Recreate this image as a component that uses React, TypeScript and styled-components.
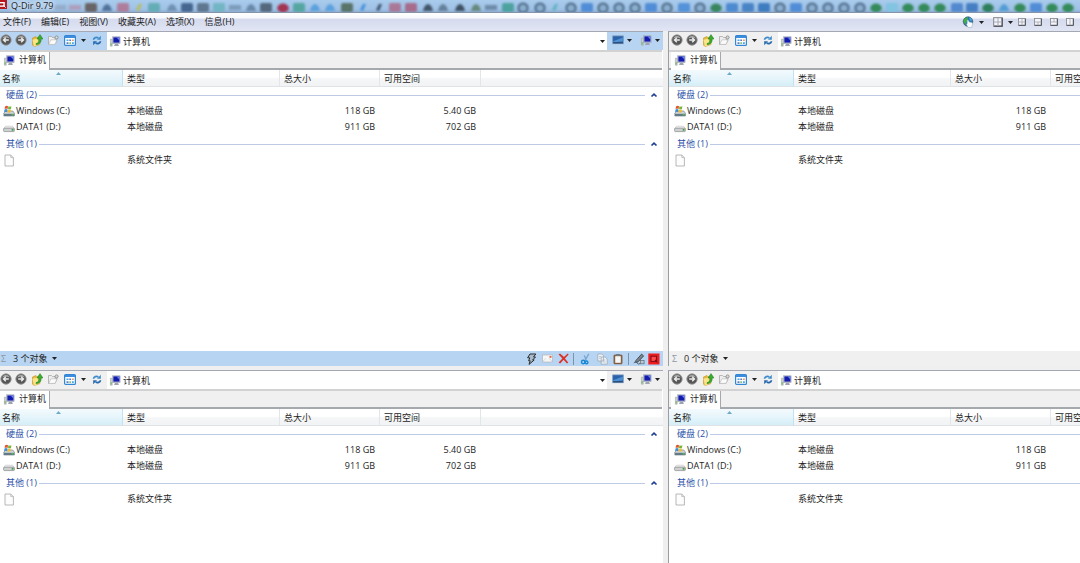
import React from 'react';
import styled, { createGlobalStyle } from 'styled-components';

const GlobalStyle = createGlobalStyle`
  * { box-sizing: border-box; }
  body {
    margin: 0;
    overflow: hidden;
    background: #f0f0f0;
    color: #1d1d1d;
    font: 9px/14px "Open Sans", "Noto Sans CJK SC", sans-serif;
  }
  button, input {
    font: inherit;
    color: inherit;
    border: 0;
    padding: 0;
    margin: 0;
    background: none;
  }
  svg { display: block; flex: none; }
`;

const Shell = styled.div`
  height: 100vh;
  display: flex;
  flex-direction: column;
`;

const TitleBar = styled.header`
  flex: none;
  height: 13px;
  overflow: hidden;
  display: grid;
  background: linear-gradient(#a9cbec, #9fc2e6 75%, #8fb0d4);
  border-bottom: 1px solid #8593a8;
  > * { grid-area: 1 / 1; }
`;

const TitleText = styled.div`
  display: flex;
  align-items: flex-start;
  gap: 3px;
  z-index: 1;
`;

const TitleName = styled.h1`
  margin: 0;
  font: inherit;
  line-height: 12px;
  text-shadow: 0 0 4px #fff, 0 0 6px #fff;
`;

const MenuBar = styled.nav`
  flex: none;
  height: 18px;
  display: flex;
  align-items: center;
  justify-content: space-between;
  padding: 0 2px 0 3px;
  background: linear-gradient(#fff, #f7f8fc 28%, #d5dbee 34%, #e1e5f4);
`;

const Menus = styled.div`
  display: flex;
  gap: 10px;
`;

const LayoutTools = styled.div`
  display: grid;
  grid-template-columns: 12px 14px 19px 7px repeat(4, 16px);
  align-items: center;
`;

const IconButton = styled.button`
  display: flex;
  align-items: center;
  justify-content: center;
  min-width: 0;
`;

const Workspace = styled.main`
  flex: 1;
  min-height: 0;
  display: grid;
  grid-template-columns: minmax(0, 663fr) 5px minmax(0, 412fr);
  grid-template-rows: minmax(0, 335fr) 4px minmax(0, 193fr);
  background: #efefef;
`;

const Cell = styled.div<{ $right: boolean; $bottom: boolean }>`
  grid-column: ${p => (p.$right ? 3 : 1)};
  grid-row: ${p => (p.$bottom ? 3 : 1)};
  overflow: hidden;
  display: flex;
  border-top: 1px solid #a4a8b2;
  border-left: ${p => (p.$right ? '1px solid #9a9da1' : '0')};
`;

const PaneBox = styled.section<{ $edge: number; $wide: boolean }>`
  --edge: ${p => p.$edge}px;
  flex: 1 0 ${p => (p.$wide ? '665px' : '0')};
  min-width: 0;
  display: flex;
  flex-direction: column;
  background: #fff;
`;

const Toolbar = styled.div<{ $active: boolean }>`
  flex: none;
  height: 18px;
  display: flex;
  padding-left: var(--edge);
  background: ${p => (p.$active ? '#b7d4f2' : '#f0f0f0')};
`;

const NavTools = styled.div`
  flex: none;
  display: grid;
  grid-template-columns: 11px 20px 12px 20px 14px 12px 16px 2px;
  align-items: center;
  padding-bottom: 2px;
`;

const PlaceTools = styled.div`
  flex: none;
  display: flex;
  gap: 6px;
  padding: 0 1px 2px 5px;
`;

const SplitButton = styled.div`
  display: grid;
  grid-template-columns: 12px 10px;
  align-items: center;
`;

const Address = styled.label`
  flex: 1;
  min-width: 0;
  display: flex;
  align-items: center;
  gap: 2px;
  padding: 0 2px;
  background: #fff;
`;

const AddressInput = styled.input`
  flex: 1;
  min-width: 0;
  height: 16px;
  outline: 0;
`;

const TabStrip = styled.div`
  flex: none;
  height: 20px;
  display: flex;
  margin-right: 1px;
  padding-left: var(--edge);
  background: #f0f0f0;
  border-top: 2px solid #d2d2d2;
  border-bottom: 2px solid #a5a9ad;
`;

const Tab = styled.button`
  display: flex;
  align-items: center;
  gap: 4px;
  width: 50px;
  height: 18px;
  padding: 0 0 2px 3px;
  background: #fff;
  border-right: 1px solid #a5a9ad;
`;

const List = styled.div`
  flex: 1;
  min-height: 0;
  overflow: hidden;
`;

const Table = styled.table`
  width: 100%;
  table-layout: fixed;
  border-collapse: separate;
  border-spacing: 0;
`;

const NameCol = styled.col`
  width: calc(123px + var(--edge));
`;

const Col = styled.col<{ $w?: number }>`
  width: ${p => (p.$w ? `${p.$w}px` : 'auto')};
`;

const Th = styled.th<{ $sorted?: boolean }>`
  height: 17px;
  padding: 0 4px;
  text-align: left;
  font-weight: 400;
  vertical-align: middle;
  white-space: nowrap;
  background: ${p => (p.$sorted
    ? 'linear-gradient(#f3fafd, #e6f5fb 50%, #d5eef7)'
    : 'linear-gradient(#fff 45%, #f5f6f7 55%, #f2f3f4)')};
  border-right: 1px solid ${p => (p.$sorted ? '#bfe3f1' : '#e3e6e9')};
  border-bottom: 1px solid #dfe3e6;
  padding-top: 2px;
  &:first-child { padding-left: calc(2px + var(--edge)); }
  &:last-child { border-right: 0; }
`;

const HeadInner = styled.span`
  display: grid;
  grid-template-columns: 1fr 8px 1fr;
  svg { align-self: start; }
`;

const GroupCell = styled.th`
  height: 16px;
  padding: 0 5px 0 calc(6px + var(--edge));
  font-weight: 400;
  color: #2a4fa8;
  text-align: left;
  tbody + tbody & { height: 17px; padding-top: 1px; }
`;

const GroupInner = styled.div`
  display: flex;
  align-items: center;
  height: 16px;
`;

const GroupName = styled.span`
  flex: none;
  width: 33px;
  white-space: nowrap;
`;

const GroupLine = styled.span`
  flex: 1;
  height: 1px;
  margin-right: 5px;
  background: #bccae6;
`;

const Td = styled.td<{ $num?: boolean }>`
  height: 16px;
  padding: 0 5px 0 4px;
  vertical-align: middle;
  white-space: nowrap;
  text-align: ${p => (p.$num ? 'right' : 'left')};
  &:first-child { padding-left: calc(3px + var(--edge)); }
`;

const FileName = styled.span`
  display: flex;
  align-items: center;
  gap: 1px;
  height: 14px;
`;

const StatusBar = styled.footer<{ $active: boolean }>`
  flex: none;
  height: 15px;
  display: flex;
  justify-content: space-between;
  padding: 0 2px 0 var(--edge);
  background: ${p => (p.$active ? '#b7d4f2' : '#f0f0f0')};
`;

const StatusInfo = styled.div`
  display: flex;
  align-items: center;
  gap: 4px;
`;

const Sigma = styled.span`
  width: 9px;
  padding-left: 1px;
  color: #8d98a3;
`;

const StatusTools = styled.div`
  display: grid;
  grid-template-columns: 16px 16px 16px 5px 18px 16px 16px 5px 16px 14px;
  align-items: center;
  justify-items: center;
`;

const Divider = styled.span`
  width: 1px;
  height: 12px;
  background: #7d93aa;
`;

/* ---------- icons ---------- */

const Caret = () => (
  <svg width="5" height="3" viewBox="0 0 5 3"><path d="M0 0h5L2.5 3z" fill="#222" /></svg>
);

const Arrow = ({ flip }: { flip?: boolean }) => (
  <svg width="12" height="12" viewBox="0 0 12 12">
    <circle cx="6" cy="6" r="5.2" fill="#565656" stroke="#979797" strokeWidth=".9" />
    <path d="M2 4.4a4.4 4.4 0 0 1 8 0Q6 3 2 4.4" fill="#a5a5a5" />
    <path d={flip ? 'M3.2 6h5M6.2 3.8 8.5 6 6.2 8.2' : 'M8.8 6h-5M5.8 3.8 3.5 6l2.3 2.2'} fill="none" stroke="#ececec" strokeWidth="1.4" />
  </svg>
);

const FolderUp = () => (
  <svg width="12" height="13" viewBox="0 0 12 13">
    <path d="M1.5 4 5 2.5l1 1.2 3-.7v7.5L3 12.5 1.5 11z" fill="#e6b93a" stroke="#bd932b" strokeWidth=".6" />
    <path d="m1.5 5.8 5-1.4L9.3 10 3 12.5z" fill="#fbe487" />
    <path d="M5 9.6c2.5-.4 3-2 2.8-4.6H6L9 .6 12 5h-1.8c.2 3.4-1.6 5.6-5.2 5.6z" fill="#3cab2f" stroke="#1f7a1c" strokeWidth=".5" />
  </svg>
);

const NewFolder = () => (
  <svg width="12" height="12" viewBox="0 0 12 12">
    <path d="M1.5 2.5h3l.8 1H8v2.2h2.2L8 10.5H1.5z" fill="#eee" stroke="#a9a9a9" strokeWidth=".8" />
    <path d="m1.7 10.4 2.2-4.6h6L8 10.4z" fill="#fbfbfb" stroke="#b5b5b5" strokeWidth=".6" />
    <circle cx="9.6" cy="3.4" r="1.5" fill="#ddd" stroke="#8c8c8c" strokeWidth=".9" />
  </svg>
);

const Views = () => (
  <svg width="12" height="11" viewBox="0 0 12 11">
    <rect x=".6" y=".6" width="10.8" height="9.8" rx="1" fill="#fff" stroke="#3286d4" strokeWidth="1.2" />
    <path d="M1 1h10v2H1z" fill="#3c8ddb" />
    <path d="M2.5 4.5h2v1.6h-2zM8 7.3h1.8v1.6H8z" fill="#3fa7e8" />
    <path d="M5.3 4.5h1.8v1.6H5.3zM2.5 7.3h2v1.6h-2z" fill="#5b78c0" />
    <path d="M8 4.5h1.8v1.6H8z" fill="#e79a67" />
    <path d="M5.3 7.3h1.8v1.6H5.3z" fill="#78b96c" />
  </svg>
);

const Refresh = () => (
  <svg width="10" height="11" viewBox="0 0 10 11">
    <path d="M1.4 4.8C2 2.6 4.4 1.8 6.4 3" fill="none" stroke="#3d8bcb" strokeWidth="1.6" />
    <path d="M8.8.8v4H5z" fill="#3d8bcb" />
    <path d="M8.6 6.2C8 8.4 5.6 9.2 3.6 8" fill="none" stroke="#2468ad" strokeWidth="1.6" />
    <path d="M1.2 10.2v-4H5z" fill="#2468ad" />
  </svg>
);

const Computer = () => (
  <svg width="12" height="11" viewBox="0 0 12 11">
    <path d="M1.4 3.2h1.8v7H1.4z" fill="#d4d9d4" stroke="#9aa69c" strokeWidth=".6" />
    <path d="M1.6 7.2h1.1v2.4H1.6z" fill="#6bb36b" />
    <rect x="3.7" y=".8" width="7.4" height="6.8" fill="#b9bed2" stroke="#9298ad" strokeWidth=".5" />
    <path d="M4.4 1.4h6v5.2h-6z" fill="#141cae" />
    <path d="M7.6 1.4h2.8v3z" fill="#6d8cf0" />
    <path d="M6 7.7h3l.9 2.2H5z" fill="#9ea3af" />
  </svg>
);

const Desktop = () => (
  <svg width="12" height="10" viewBox="0 0 12 10">
    <rect x=".7" y=".9" width="10.6" height="7.8" fill="#2a62ac" stroke="#7d9bbd" strokeWidth=".8" />
    <path d="M1.2 6.2 10.9 2.4v4L1.2 7.2z" fill="#4f92d4" />
    <path d="M1.2 7.3h9.7v1.1H1.2z" fill="#2f4a6b" />
  </svg>
);

const WindowsDrive = () => (
  <svg width="12" height="12" viewBox="0 0 12 12">
    <path d="m.8 8.2 2-2.2h7l1.6 2.2V11H.8z" fill="#cfd5d8" stroke="#69767c" strokeWidth=".6" />
    <path d="M1 8.8h10.2V11H1z" fill="#637b84" />
    <path d="M8.6 9.3h2v1h-2z" fill="#54d24c" />
    <path d="M2 1.4q1.5-1 3-.2L4.6 4Q3.2 3.2 1.6 4z" fill="#e1532c" />
    <path d="M5.4 1.3q1.5.8 3 0L8 4.1q-1.5.8-3 0z" fill="#74b83a" />
    <path d="M1.5 4.5Q3 3.7 4.5 4.5l-.4 2.7q-1.5-.8-3 0z" fill="#3b8ed6" />
    <path d="M4.9 4.6q1.5.8 3 0l-.4 2.7q-1.5.8-3 0z" fill="#f4bd2d" />
  </svg>
);

const Drive = () => (
  <svg width="12" height="12" viewBox="0 0 12 12">
    <path d="M.8 7.4 2.6 5.2h6.8l1.8 2.2z" fill="#efefef" stroke="#b4b4b4" strokeWidth=".5" />
    <rect x=".6" y="7.2" width="10.8" height="3.4" rx=".8" fill="#cfd0d1" stroke="#85888a" strokeWidth=".7" />
    <path d="M8.7 8h1.8v1.7H8.7z" fill="#3da33b" />
  </svg>
);

const Page = () => (
  <svg width="12" height="13" viewBox="0 0 12 13">
    <path d="M2 1h5.8L10.4 3.6V12H2z" fill="#fdfdfd" stroke="#a6a6a6" strokeWidth=".8" />
    <path d="M7.8 1v2.6h2.6" fill="#e4e4e4" stroke="#a6a6a6" strokeWidth=".6" />
  </svg>
);

const Chevron = () => (
  <svg width="8" height="6" viewBox="0 0 8 6"><path d="m1.5 4.5 2.5-2.4 2.5 2.4" fill="none" stroke="#1f3f96" strokeWidth="1.7" /></svg>
);

const SortMark = () => (
  <svg width="5" height="3" viewBox="0 0 5 3"><path d="M0 3 2.5 0 5 3z" fill="#6ea9c8" /></svg>
);

const Bolt = () => (
  <svg width="11" height="12" viewBox="0 0 11 12">
    <path d="M4 1h5.8L7.5 4h2L6.6 7h1.6L3 11.4l1.2-3.6H2.6l1.2-3H1.6z" fill="#a9bccd" stroke="#2b2b2b" strokeWidth="1" />
  </svg>
);

const Mail = () => (
  <svg width="11" height="9" viewBox="0 0 11 9">
    <rect x=".5" y="1" width="10" height="7" fill="#f6f6f6" stroke="#b1b5ba" strokeWidth=".7" />
    <path d="m1 7 3-2.5M10 7 7 4.5" stroke="#c5c9ce" strokeWidth=".6" />
    <path d="M7.5 2h2v1.8h-2z" fill="#e0603f" />
  </svg>
);

const Delete = () => (
  <svg width="11" height="11" viewBox="0 0 11 11">
    <path d="M.6 1.4 2 .5Q4.8 2.8 5.9 4.1L9.8.6l.8.8L6.9 5.4l3.3 4.2-1.2.9-3.4-3.7-3.5 3.7-1.5-1.1 3.8-3.9z" fill="#dc3024" />
  </svg>
);

const Cut = () => (
  <svg width="11" height="12" viewBox="0 0 11 12">
    <path d="M8.8.8 5 7.6M4.3 2.4l1.9 5.2" stroke="#79a6cc" strokeWidth="1.3" />
    <circle cx="3.2" cy="9" r="1.7" fill="none" stroke="#1787d8" strokeWidth="1.4" />
    <circle cx="6.5" cy="9.4" r="1.4" fill="none" stroke="#1787d8" strokeWidth="1.4" />
  </svg>
);

const Copy = () => (
  <svg width="11" height="12" viewBox="0 0 11 12">
    <path d="M.8 1h4l1.6 1.6V8H.8zM4.2 4h4l2 2v5.2h-6z" fill="#edf2f7" stroke="#9eaab6" strokeWidth=".8" />
    <path d="M2 3.5h2M2 5.3h1.6M5.6 7h2.8M5.6 9h3" stroke="#aab5c0" strokeWidth=".7" />
  </svg>
);

const Paste = () => (
  <svg width="10" height="12" viewBox="0 0 10 12">
    <rect x=".9" y="1.9" width="8.2" height="9" rx=".8" fill="#8a6340" stroke="#735338" strokeWidth=".6" />
    <path d="M2.2 3.2h5.6v6.6H2.2z" fill="#f4f6f8" />
    <path d="M3 1h4v2H3z" fill="#74797d" />
  </svg>
);

const Pen = () => (
  <svg width="12" height="12" viewBox="0 0 12 12">
    <path d="m3 7.4 5.6-6.3 2 1.8L5 8.9l-2.4.6z" fill="#7d858c" stroke="#3d444a" strokeWidth=".9" />
    <path d="M.8 10Q2.4 7.2 3.8 9.6t3.4.9" fill="none" stroke="#555d64" strokeWidth="1" />
    <rect x="7.3" y="7.6" width="3.8" height="3.2" fill="#b9c8d4" stroke="#5f6a73" strokeWidth=".7" />
  </svg>
);

const QMark = () => (
  <svg width="12" height="12" viewBox="0 0 12 12">
    <rect x=".3" y=".5" width="11.2" height="11" fill="#ec1c20" />
    <rect x="3" y="3.2" width="5.4" height="5.2" fill="#ff4d4f" stroke="#7d0c0e" strokeWidth="1" />
    <path d="m7 7 2.4 2.4" stroke="#7d0c0e" strokeWidth="1.1" />
  </svg>
);

const AppIcon = () => (
  <svg width="8" height="10" viewBox="0 0 8 10">
    <path d="M0 0h7v9H0z" fill="#b8161d" />
    <path d="M0 2h4.8v4.8H0z" fill="#fff" />
    <path d="M0 3.4h3.4v2H0z" fill="#a81018" />
    <path d="m3.4 5.4 2.2 2.2" stroke="#fff" strokeWidth="1" />
  </svg>
);

const Globe = () => (
  <svg width="12" height="12" viewBox="0 0 12 12">
    <circle cx="6" cy="5.6" r="4.8" fill="#2a78a8" stroke="#28404c" strokeWidth=".5" />
    <path d="M1.6 3.8Q3.6.8 6 1.2L5.4 4.6 3.4 8 1.6 6.4z" fill="#3fae4a" />
    <path d="M6.8 1.2q2.8.6 3.6 3L8.4 5z" fill="#52a6e0" />
    <path d="M5.2 4.2q1-.8 1.3.4L7.2 6l2.8.6q1 .6.6 2L9.6 11.5H6L4.4 8.2l.8-.6z" fill="#f8fbff" stroke="#8fa6ba" strokeWidth=".5" />
  </svg>
);

const LAYOUTS: Record<string, string> = {
  four: 'M4.5 1v7M1 4.5h7',
  three: 'M1 4.5h7M4.5 4.5V8',
  split: 'M1 4.5h7M4.5 1v3.5',
  two: 'M4.5 1v7',
};

const LayoutIcon = ({ kind, size = 8 }: { kind: string; size?: number }) => (
  <svg width={size} height={size} viewBox="0 0 9 9">
    <rect x=".6" y=".6" width="7.8" height="7.8" fill="#f4f5f9" stroke="#8c8f99" strokeWidth="1" />
    <path d="M8.2 1v7.2H1" fill="none" stroke="#4a4c54" strokeWidth="1.1" />
    <path d={LAYOUTS[kind]} stroke="#aaacb6" strokeWidth="1" />
  </svg>
);

/* ---------- glass title strip: desktop icons showing through ---------- */

const GLASS: [number, string, string][] = [
  [60, 'b', '#8fa3bd'], [75, 'b', '#b48fa8'], [91, 's', '#5e5450'], [107, 'd', '#3d5f86'], [123, 's', '#b0718e'],
  [139, 'y', '#b9bd5c'], [154, 's', '#5ba9ad'], [172, 'd', '#6484a4'], [187, 's', '#365680'], [203, 's', '#536a80'],
  [219, 's', '#6bb3bd'], [235, 'b', '#6e8ba8'], [251, 'd', '#5d7b98'], [266, 's', '#47586b'], [283, 'c', '#a33352'],
  [299, 's', '#48a195'], [315, 'd', '#4a98dc'], [330, 'd', '#4a98dc'], [347, 's', '#4c6654'], [363, 'y', '#4290dc'],
  [379, 'y', '#3f526c'], [395, 's', '#aa6b8b'], [411, 's', '#a85d7b'], [428, 'd', '#2a394a'], [443, 'd', '#566f88'],
  [460, 'd', '#263442'], [476, 'd', '#597b63'], [491, 'b', '#58738f'], [508, 's', '#3e9c93'], [523, 'r', ''],
  [540, 'r', ''], [555, 'y', '#5eb3bd'], [571, 'r', ''], [587, 's', '#4384d4'], [603, 'r', ''], [619, 'r', ''],
  [635, 'r', ''], [651, 's', '#4384d4'], [667, 'r', ''], [684, 's', '#4689d6'], [700, 'r', ''], [716, 'c', '#38855f'],
  [732, 's', '#3f80cb'], [748, 's', '#3b79c0'], [764, 's', '#2e70b8'], [780, 'r', ''], [796, 's', '#4384d4'],
  [812, 'r', ''], [828, 'r', ''], [844, 'r', ''], [860, 'r', ''], [876, 'c', '#348a5a'], [892, 's', '#7cc4df'],
  [908, 'c', '#348a5a'], [924, 'c', '#348a5a'], [940, 'c', '#348a5a'], [957, 's', '#467fca'], [972, 's', '#3672bd'],
  [988, 'c', '#2d7e5c'], [1004, 'd', '#3e93d0'], [1020, 'c', '#348a5a'], [1036, 's', '#4384d4'], [1052, 'c', '#348a5a'],
  [1068, 'c', '#348a5a'],
];

const GlassLayer = styled.g`
  filter: blur(1px);
`;

const Glass = () => (
  <svg width="1080" height="12" viewBox="0 0 1080 12" aria-hidden="true">
    <GlassLayer>
      {GLASS.map(([x, kind, fill]) => {
        if (kind === 'r') return <circle key={x} cx={x} cy="8" r="4.6" fill="#8baecf" stroke="#4b6784" strokeWidth="2" />;
        if (kind === 'c') return <ellipse key={x} cx={x} cy="8" rx="5.8" ry="4.4" fill={fill} />;
        if (kind === 'd') return <path key={x} d={`M${x - 5} 11q1-6 5-7q4 1 5 7z`} fill={fill} opacity=".8" />;
        if (kind === 'y') return <path key={x} d={`M${x - 3} 10l3-6h3l-3 7z`} fill={fill} />;
        if (kind === 'b') return <rect key={x} x={x - 6} y="5" width="12" height="5" fill={fill} opacity=".7" />;
        return <rect key={x} x={x - 6} y="3" width="12" height="9" rx="2" fill={fill} opacity=".85" />;
      })}
    </GlassLayer>
  </svg>
);

/* ---------- page ---------- */

type Row = { name: string; icon: React.ReactNode; type: string; size?: string; free?: string };

const GROUPS: { label: string; rows: Row[] }[] = [
  {
    label: '硬盘 (2)',
    rows: [
      { name: 'Windows (C:)', icon: <WindowsDrive />, type: '本地磁盘', size: '118 GB', free: '5.40 GB' },
      { name: 'DATA1 (D:)', icon: <Drive />, type: '本地磁盘', size: '911 GB', free: '702 GB' },
    ],
  },
  { label: '其他 (1)', rows: [{ name: '', icon: <Page />, type: '系统文件夹' }] },
];

const FileList = () => (
  <List>
    <Table>
      <colgroup><NameCol /><Col $w={157} /><Col $w={100} /><Col $w={101} /><Col /></colgroup>
      <thead>
        <tr>
          <Th $sorted aria-sort="ascending"><HeadInner>名称<SortMark /></HeadInner></Th>
          <Th>类型</Th>
          <Th>总大小</Th>
          <Th>可用空间</Th>
          <Th aria-label="空白" />
        </tr>
      </thead>
      {GROUPS.map(group => (
        <tbody key={group.label}>
          <tr>
            <GroupCell colSpan={5} scope="rowgroup">
              <GroupInner>
                <GroupName>{group.label}</GroupName>
                <GroupLine />
                <IconButton aria-label="折叠"><Chevron /></IconButton>
              </GroupInner>
            </GroupCell>
          </tr>
          {group.rows.map(row => (
            <tr key={row.type + row.name}>
              <Td><FileName>{row.icon}{row.name}</FileName></Td>
              <Td>{row.type}</Td>
              <Td $num>{row.size}</Td>
              <Td $num>{row.free}</Td>
              <Td />
            </tr>
          ))}
        </tbody>
      ))}
    </Table>
  </List>
);

type PaneProps = { right?: boolean; bottom?: boolean; active?: boolean; count?: number };

const Pane = ({ right = false, bottom = false, active = false, count = 0 }: PaneProps) => (
  <Cell $right={right} $bottom={bottom}>
    <PaneBox $edge={right ? 2 : 0} $wide={right}>
      <Toolbar $active={active}>
        <NavTools>
          <IconButton aria-label="后退"><Arrow /></IconButton>
          <IconButton aria-label="前进"><Arrow flip /></IconButton>
          <IconButton aria-label="向上"><FolderUp /></IconButton>
          <IconButton aria-label="新建文件夹"><NewFolder /></IconButton>
          <IconButton aria-label="查看"><Views /></IconButton>
          <IconButton aria-label="查看选项"><Caret /></IconButton>
          <IconButton aria-label="刷新"><Refresh /></IconButton>
        </NavTools>
        <Address>
          <Computer />
          <AddressInput aria-label="地址" defaultValue="计算机" />
          <IconButton aria-label="历史"><Caret /></IconButton>
        </Address>
        <PlaceTools>
          <SplitButton>
            <IconButton aria-label="桌面"><Desktop /></IconButton>
            <IconButton aria-label="桌面选项"><Caret /></IconButton>
          </SplitButton>
          <SplitButton>
            <IconButton aria-label="计算机"><Computer /></IconButton>
            <IconButton aria-label="计算机选项"><Caret /></IconButton>
          </SplitButton>
        </PlaceTools>
      </Toolbar>
      <TabStrip role="tablist">
        <Tab role="tab" aria-selected="true"><Computer />计算机</Tab>
      </TabStrip>
      <FileList />
      {!bottom && (
        <StatusBar $active={active}>
          <StatusInfo>
            <Sigma>Σ</Sigma>
            <span>{count} 个对象</span>
            <IconButton aria-label="对象选项"><Caret /></IconButton>
          </StatusInfo>
          <StatusTools>
            <IconButton aria-label="快速"><Bolt /></IconButton>
            <IconButton aria-label="邮件"><Mail /></IconButton>
            <IconButton aria-label="删除"><Delete /></IconButton>
            <Divider />
            <IconButton aria-label="剪切"><Cut /></IconButton>
            <IconButton aria-label="复制"><Copy /></IconButton>
            <IconButton aria-label="粘贴"><Paste /></IconButton>
            <Divider />
            <IconButton aria-label="重命名"><Pen /></IconButton>
            <IconButton aria-label="Q-Dir"><QMark /></IconButton>
          </StatusTools>
        </StatusBar>
      )}
    </PaneBox>
  </Cell>
);

const MENUS = ['文件(F)', '编辑(E)', '视图(V)', '收藏夹(A)', '选项(X)', '信息(H)'];

export default function App() {
  return (
    <Shell>
      <GlobalStyle />
      <TitleBar>
        <Glass />
        <TitleText><AppIcon /><TitleName>Q-Dir 9.79</TitleName></TitleText>
      </TitleBar>
      <MenuBar>
        <Menus>{MENUS.map(m => <button key={m}>{m}</button>)}</Menus>
        <LayoutTools>
          <IconButton aria-label="网络"><Globe /></IconButton>
          <IconButton aria-label="网络选项"><Caret /></IconButton>
          <IconButton aria-label="布局"><LayoutIcon kind="four" size={10} /></IconButton>
          <IconButton aria-label="布局选项"><Caret /></IconButton>
          <IconButton aria-label="四窗格"><LayoutIcon kind="four" /></IconButton>
          <IconButton aria-label="三窗格"><LayoutIcon kind="three" /></IconButton>
          <IconButton aria-label="上下窗格"><LayoutIcon kind="split" /></IconButton>
          <IconButton aria-label="左右窗格"><LayoutIcon kind="two" /></IconButton>
        </LayoutTools>
      </MenuBar>
      <Workspace>
        <Pane active count={3} />
        <Pane right />
        <Pane bottom />
        <Pane right bottom />
      </Workspace>
    </Shell>
  );
}
